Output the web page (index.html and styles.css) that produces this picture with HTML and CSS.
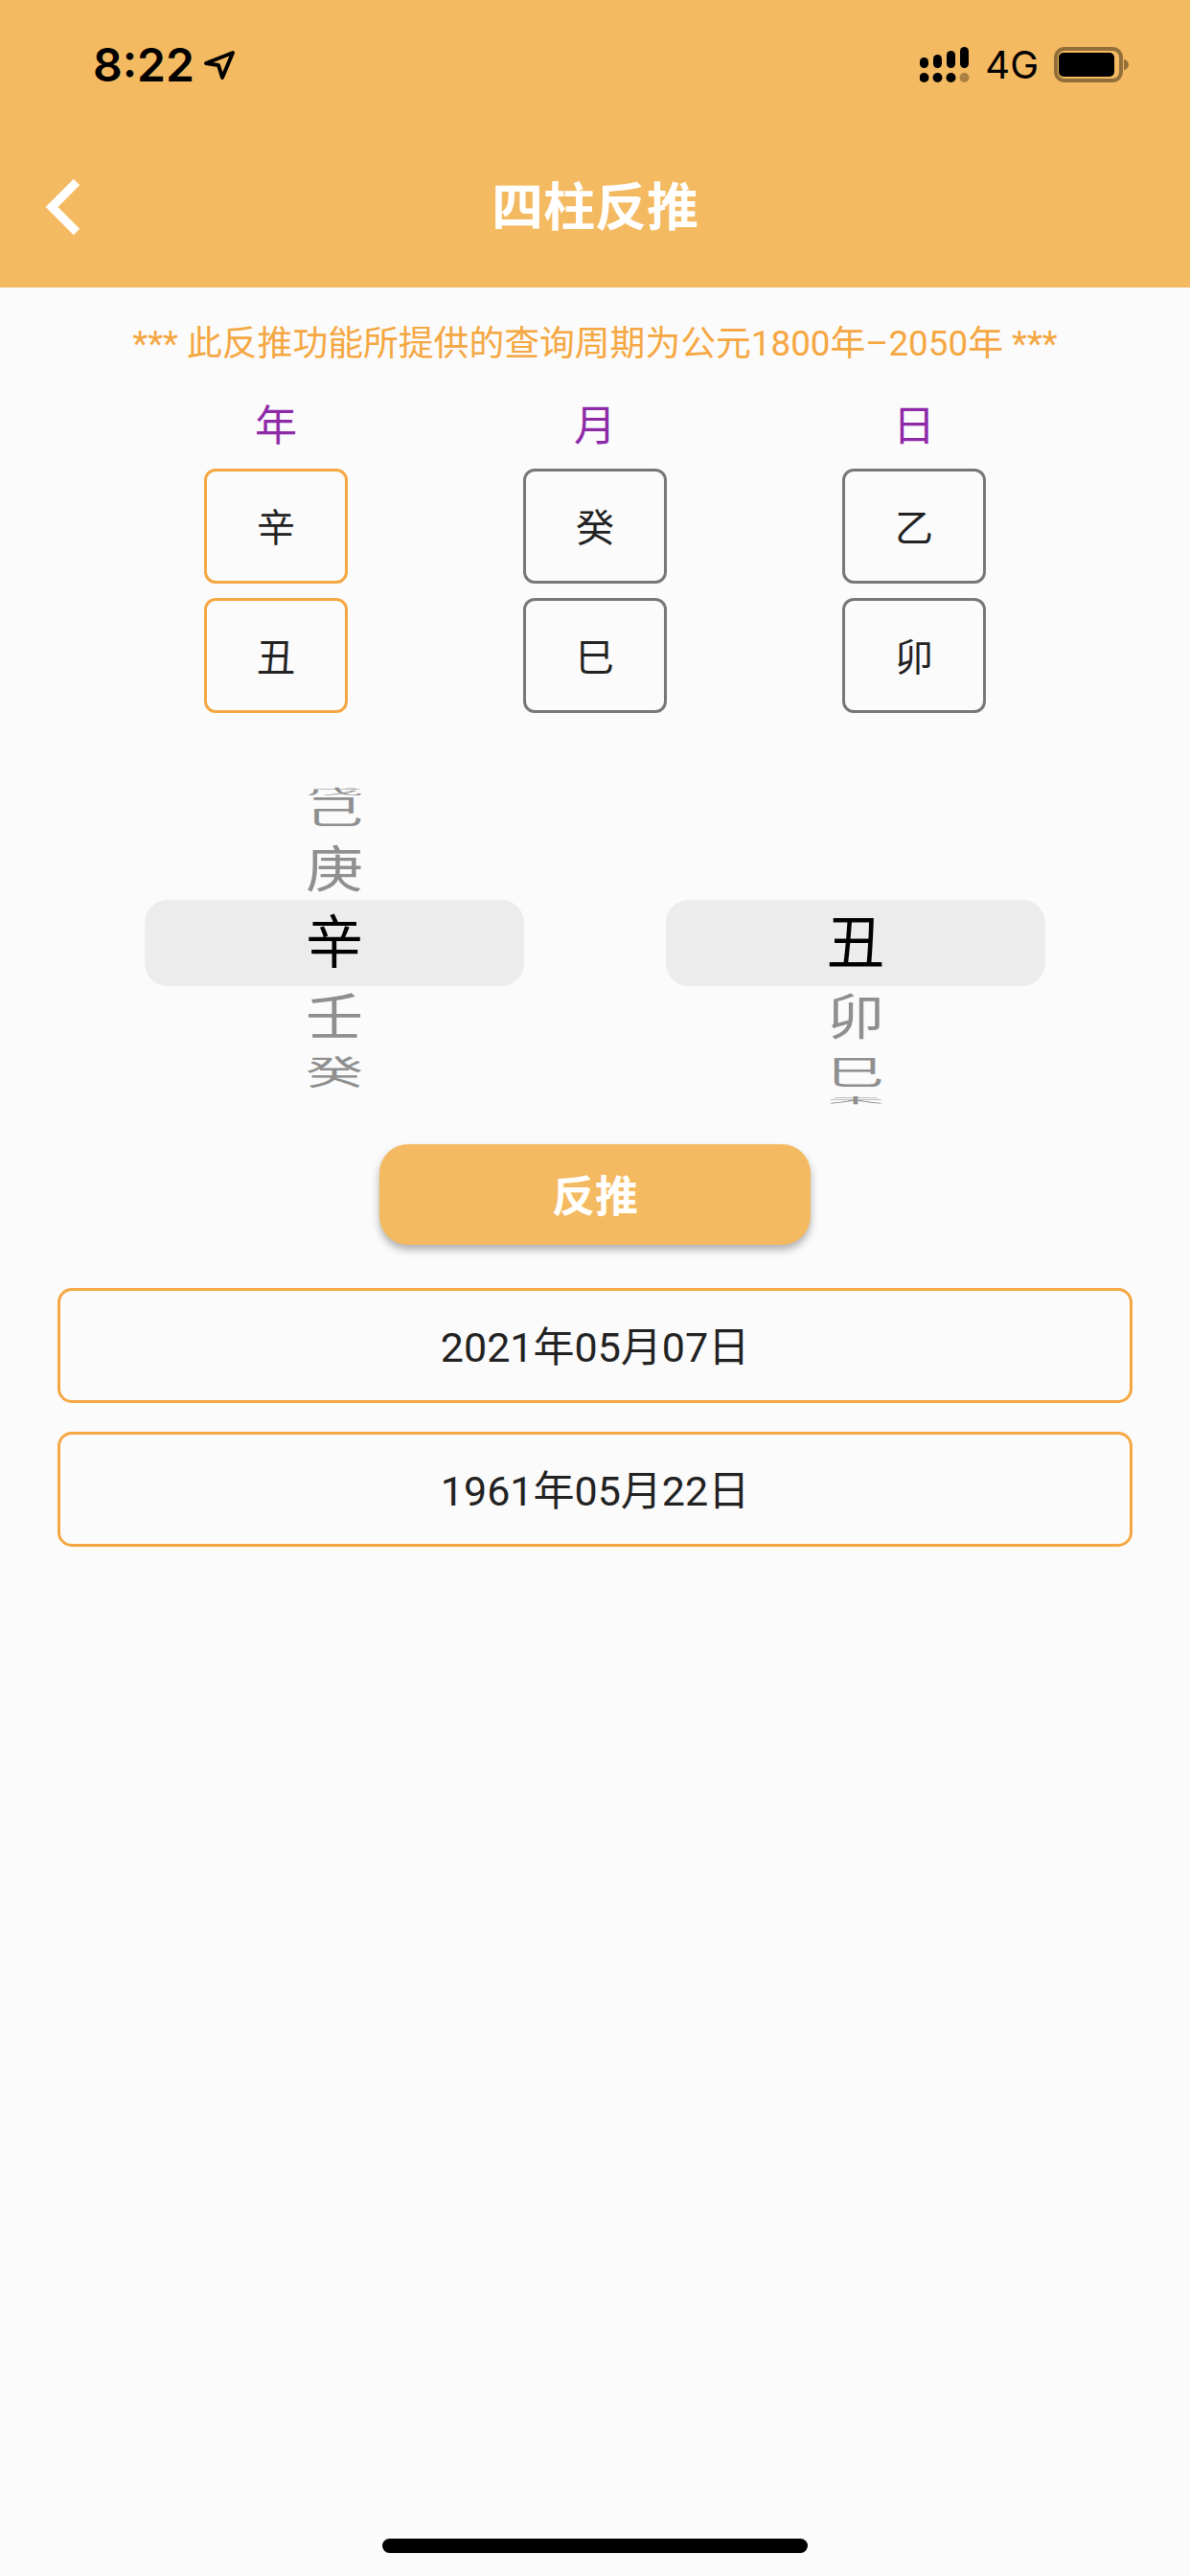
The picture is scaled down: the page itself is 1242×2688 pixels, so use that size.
FILE: index.html
```html
<!DOCTYPE html>
<html lang="zh-CN">
<head>
<meta charset="utf-8">
<title>四柱反推</title>
<link rel="stylesheet" href="styles.css">
</head>
<body>
<div class="page">
  <header class="header">
    <div class="status">
      <div class="status-left">
        <span class="time">8:22</span>
        <svg class="loc" width="34" height="32" viewBox="0 0 34 32"><path d="M31 3 L3 14 L16 16 L20 29 Z" fill="none" stroke="#000" stroke-width="4" stroke-linejoin="round"/></svg>
      </div>
      <div class="status-right">
        <svg class="signal" width="52" height="37" viewBox="0 0 52 37">
          <rect x="0" y="11" width="9" height="11" rx="4.5"/>
          <rect x="14" y="8" width="9" height="14" rx="4.5"/>
          <rect x="28" y="4" width="9" height="18" rx="4.5"/>
          <rect x="42" y="0" width="9" height="22" rx="4.5"/>
          <circle cx="4.5" cy="32" r="5"/>
          <circle cx="18.5" cy="32" r="5"/>
          <circle cx="32.5" cy="32" r="5"/>
          <circle cx="46.5" cy="32" r="5" opacity=".3"/>
        </svg>
        <span class="net">4G</span>
        <svg class="battery" width="78" height="37" viewBox="0 0 78 37">
          <rect x="2" y="2" width="68" height="33" rx="9" fill="none" stroke="#000" stroke-opacity=".4" stroke-width="4"/>
          <rect x="5" y="6" width="58" height="25" rx="5"/>
          <path d="M73 12.5 Q78 15 78 18.5 Q78 22 73 24.5 Z" opacity=".4"/>
        </svg>
      </div>
    </div>
    <div class="nav">
      <svg class="back" width="45" height="72" viewBox="0 0 45 72"><path d="M37 10 L11 36 L37 62" fill="none" stroke="#fff" stroke-width="9"/></svg>
      <h1 class="title">四柱反推</h1>
    </div>
  </header>

  <p class="notice">*** 此反推功能所提供的查询周期为公元1800年–2050年 ***</p>

  <section class="pillars">
    <div class="pillar">
      <div class="pillar-label">年</div>
      <div class="cell cell-active">辛</div>
      <div class="cell cell-active">丑</div>
    </div>
    <div class="pillar">
      <div class="pillar-label">月</div>
      <div class="cell">癸</div>
      <div class="cell">巳</div>
    </div>
    <div class="pillar">
      <div class="pillar-label">日</div>
      <div class="cell">乙</div>
      <div class="cell">卯</div>
    </div>
  </section>

  <section class="pickers">
    <div class="picker">
      <div class="band"></div>
      <div class="row r0"><span class="g s-far">戊</span></div>
      <div class="row r1"><span class="g s-mid">己</span></div>
      <div class="row r2"><span class="g s-near">庚</span></div>
      <div class="row r3"><span class="g sel">辛</span></div>
      <div class="row r4"><span class="g s-near">壬</span></div>
      <div class="row r5"><span class="g s-mid">癸</span></div>
      <div class="row r6"></div>
    </div>
    <div class="picker">
      <div class="band"></div>
      <div class="row r0"></div>
      <div class="row r1"></div>
      <div class="row r2"></div>
      <div class="row r3"><span class="g sel">丑</span></div>
      <div class="row r4"><span class="g s-near">卯</span></div>
      <div class="row r5"><span class="g s-mid">巳</span></div>
      <div class="row r6"><span class="g s-far">未</span></div>
    </div>
  </section>

  <button class="action" type="button">反推</button>

  <section class="results">
    <div class="result">2021年05月07日</div>
    <div class="result">1961年05月22日</div>
  </section>

  <div class="home-bar"></div>
</div>
</body>
</html>
```
FILE: styles.css
```css
* { box-sizing: border-box; }
html, body { margin: 0; padding: 0; }
body {
  width: 1242px;
  height: 2688px;
  overflow: hidden;
  background: #fbfbfb;
  font-family: "Roboto", "Noto Sans CJK SC", sans-serif;
  color: #222;
}
.page { display: flex; flex-direction: column; height: 2688px; }

.header { height: 300px; background: #f4ba61; display: flex; flex-direction: column; flex: none; }
.status { height: 132px; display: flex; justify-content: space-between; align-items: flex-start; padding: 42px 64px 0 97px; color: #000; }
.status-left { display: flex; align-items: center; gap: 9px; }
.time { font-family: "Inter", sans-serif; font-size: 48px; line-height: 52px; font-weight: 600; }
.loc { display: block; }
.status-right { display: flex; align-items: center; gap: 16px; padding-top: 7px; }
.signal { display: block; fill: #000; }
.net { font-family: "Inter", sans-serif; font-size: 40px; line-height: 37px; font-weight: 400; }
.battery { display: block; fill: #000; }

.nav { flex: 1; display: flex; align-items: center; justify-content: center; position: relative; padding-top: 4px; }
.back { position: absolute; left: 43px; top: 48px; }
.title { margin: 0; color: #fff; font-size: 54px; font-weight: 700; line-height: 70px; }

.notice { margin: 35px 0 0; text-align: center; color: #f5a742; font-size: 36.8px; line-height: 48px; }

.pillars { display: flex; gap: 183px; justify-content: center; margin-top: 32px; }
.pillar { width: 150px; display: flex; flex-direction: column; align-items: center; gap: 15px; }
.pillar-label { color: #8e2aa8; font-size: 44px; line-height: 60px; margin-bottom: -1px; }
.cell { width: 150px; height: 120px; padding-bottom: 2px; border: 3px solid #777; border-radius: 12px; display: flex; align-items: center; justify-content: center; font-size: 40px; color: #222; }
.cell-active { border-color: #f5a742; }

.pickers { display: flex; gap: 148px; padding-left: 151px; margin-top: 75px; }
.picker { width: 396px; position: relative; display: flex; flex-direction: column; align-items: center; }
.band { position: absolute; left: 0; right: 0; top: 120px; height: 90px; background: #ececec; border-radius: 24px; }
.row { position: relative; width: 100%; display: flex; align-items: center; justify-content: center; overflow: visible; padding-top: 6px; }
.r0 { height: 13px; padding-top: 0; overflow: hidden; }
.r1 { height: 26px; }
.r2 { height: 88px; padding-top: 12px; }
.r3 { height: 72px; }
.r4 { height: 82px; }
.r5 { height: 34px; }
.r6 { height: 22px; overflow: hidden; }
.g { font-size: 60px; line-height: 60px; color: #8f8f8f; display: block; }
.sel { color: #000; }
.s-near { transform: scaleY(.88); }
.s-mid { transform: scaleY(.58); }
.s-far { transform: scaleY(.14); }

.action { align-self: center; width: 450px; height: 105px; margin-top: 38px; padding-bottom: 4px; border: 0; border-radius: 30px; background: #f4ba61; color: #fff; font-family: inherit; font-size: 45px; font-weight: 700; box-shadow: 0 5px 9px rgba(0,0,0,.3); }

.results { display: flex; flex-direction: column; gap: 30px; margin: 45px 60px 0; }
.result { height: 120px; padding-bottom: 4px; border: 3px solid #f5a742; border-radius: 15px; display: flex; align-items: center; justify-content: center; font-size: 43px; color: #222; }

.home-bar { width: 444px; height: 15px; margin: auto auto 24px; background: #000; border-radius: 8px; }
```
